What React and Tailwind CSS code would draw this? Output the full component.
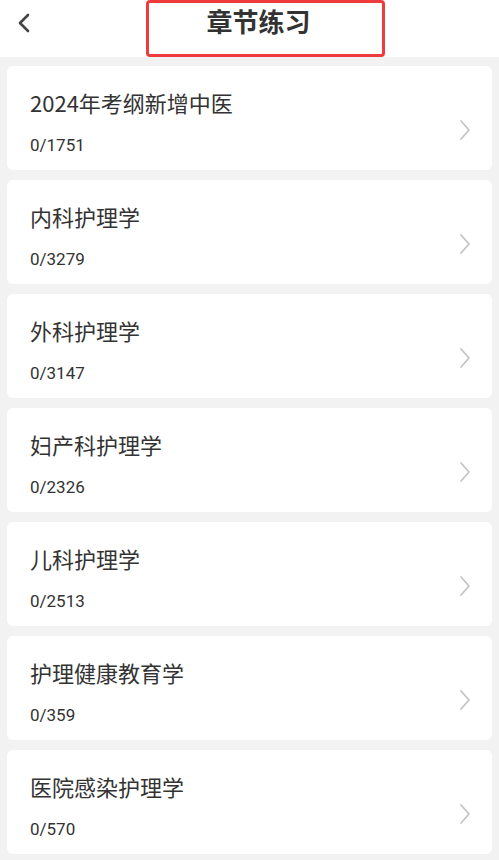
const items = [
  { title: "2024年考纲新增中医", count: "0/1751" },
  { title: "内科护理学", count: "0/3279" },
  { title: "外科护理学", count: "0/3147" },
  { title: "妇产科护理学", count: "0/2326" },
  { title: "儿科护理学", count: "0/2513" },
  { title: "护理健康教育学", count: "0/359" },
  { title: "医院感染护理学", count: "0/570" },
];

export default function App() {
  return (
    <div
      className="w-[499px] h-[860px] overflow-hidden bg-[#f2f2f2]"
      style={{ fontFamily: '"Noto Sans CJK SC", Roboto, "Noto Sans", sans-serif' }}
    >
      <div className="relative h-[57px] bg-white">
        <svg className="absolute left-[16px] top-[13px]" width="16" height="20" viewBox="0 0 16 20" fill="none">
          <path d="M12 2 L4 10 L12 18" stroke="#444" strokeWidth="2.6" strokeLinecap="round" strokeLinejoin="round" />
        </svg>
        <div className="absolute left-[146px] top-[0px] w-[239px] h-[57px] border-[3px] border-[#ee3b3b] rounded-[4px]" />
        <div className="pt-[5px] pl-[18px] text-center text-[26px] font-bold text-[#333] leading-[32px]">
          章节练习
        </div>
      </div>
      <div className="flex flex-col gap-[10px] pt-[9px] px-[7px]">
        {items.map((it) => (
          <div key={it.title} className="relative h-[104px] bg-white rounded-[6px] pl-[23px] pt-[21px]">
            <div className="text-[22px] text-[#333] leading-[30px]">{it.title}</div>
            <div className="text-[17px] text-[#333] leading-[22px] mt-[17px]" style={{ fontFamily: "Roboto, sans-serif" }}>
              {it.count}
            </div>
            <svg width="12" height="22" viewBox="0 0 12 22" fill="none" className="absolute right-[21px] top-[53px]">
              <path d="M2 2 L10 11 L2 20" stroke="#c4c4c4" strokeWidth="1.8" strokeLinecap="round" strokeLinejoin="round" />
            </svg>
          </div>
        ))}
      </div>
    </div>
  );
}
